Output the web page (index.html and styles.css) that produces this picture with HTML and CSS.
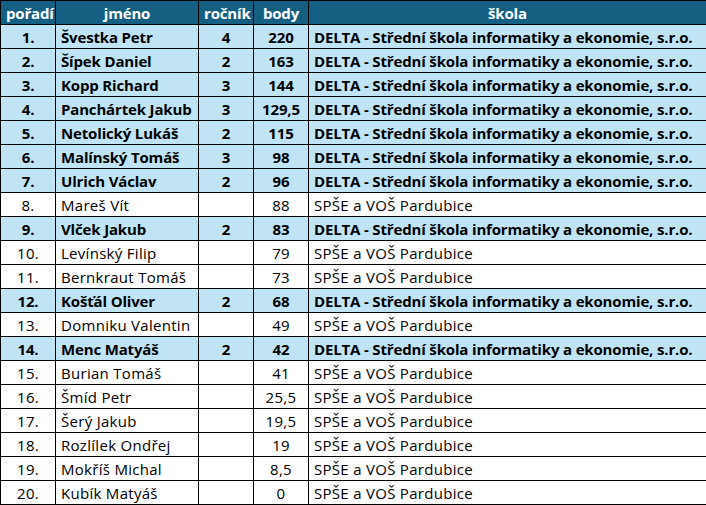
FILE: index.html
```html
<!DOCTYPE html>
<html lang="cs">
<head>
<meta charset="utf-8">
<link rel="stylesheet" href="styles.css">
</head>
<body>
<table class="results">
  <colgroup>
    <col class="c-rank"><col class="c-name"><col class="c-year"><col class="c-pts"><col class="c-school">
  </colgroup>
  <thead>
    <tr><th>pořadí</th><th>jméno</th><th>ročník</th><th>body</th><th>škola</th></tr>
  </thead>
  <tbody>
    <tr class="hl"><td class="ctr">1.</td><td>Švestka Petr</td><td class="ctr">4</td><td class="ctr">220</td><td>DELTA - Střední škola informatiky a ekonomie, s.r.o.</td></tr>
    <tr class="hl"><td class="ctr">2.</td><td>Šípek Daniel</td><td class="ctr">2</td><td class="ctr">163</td><td>DELTA - Střední škola informatiky a ekonomie, s.r.o.</td></tr>
    <tr class="hl"><td class="ctr">3.</td><td>Kopp Richard</td><td class="ctr">3</td><td class="ctr">144</td><td>DELTA - Střední škola informatiky a ekonomie, s.r.o.</td></tr>
    <tr class="hl"><td class="ctr">4.</td><td>Panchártek Jakub</td><td class="ctr">3</td><td class="ctr">129,5</td><td>DELTA - Střední škola informatiky a ekonomie, s.r.o.</td></tr>
    <tr class="hl"><td class="ctr">5.</td><td>Netolický Lukáš</td><td class="ctr">2</td><td class="ctr">115</td><td>DELTA - Střední škola informatiky a ekonomie, s.r.o.</td></tr>
    <tr class="hl"><td class="ctr">6.</td><td>Malínský Tomáš</td><td class="ctr">3</td><td class="ctr">98</td><td>DELTA - Střední škola informatiky a ekonomie, s.r.o.</td></tr>
    <tr class="hl"><td class="ctr">7.</td><td>Ulrich Václav</td><td class="ctr">2</td><td class="ctr">96</td><td>DELTA - Střední škola informatiky a ekonomie, s.r.o.</td></tr>
    <tr><td class="ctr">8.</td><td>Mareš Vít</td><td class="ctr"></td><td class="ctr">88</td><td>SPŠE a VOŠ Pardubice</td></tr>
    <tr class="hl"><td class="ctr">9.</td><td>Vlček Jakub</td><td class="ctr">2</td><td class="ctr">83</td><td>DELTA - Střední škola informatiky a ekonomie, s.r.o.</td></tr>
    <tr><td class="ctr">10.</td><td>Levínský Filip</td><td class="ctr"></td><td class="ctr">79</td><td>SPŠE a VOŠ Pardubice</td></tr>
    <tr><td class="ctr">11.</td><td>Bernkraut Tomáš</td><td class="ctr"></td><td class="ctr">73</td><td>SPŠE a VOŠ Pardubice</td></tr>
    <tr class="hl"><td class="ctr">12.</td><td>Košťál Oliver</td><td class="ctr">2</td><td class="ctr">68</td><td>DELTA - Střední škola informatiky a ekonomie, s.r.o.</td></tr>
    <tr><td class="ctr">13.</td><td>Domniku Valentin</td><td class="ctr"></td><td class="ctr">49</td><td>SPŠE a VOŠ Pardubice</td></tr>
    <tr class="hl"><td class="ctr">14.</td><td>Menc Matyáš</td><td class="ctr">2</td><td class="ctr">42</td><td>DELTA - Střední škola informatiky a ekonomie, s.r.o.</td></tr>
    <tr><td class="ctr">15.</td><td>Burian Tomáš</td><td class="ctr"></td><td class="ctr">41</td><td>SPŠE a VOŠ Pardubice</td></tr>
    <tr><td class="ctr">16.</td><td>Šmíd Petr</td><td class="ctr"></td><td class="ctr">25,5</td><td>SPŠE a VOŠ Pardubice</td></tr>
    <tr><td class="ctr">17.</td><td>Šerý Jakub</td><td class="ctr"></td><td class="ctr">19,5</td><td>SPŠE a VOŠ Pardubice</td></tr>
    <tr><td class="ctr">18.</td><td>Rozlílek Ondřej</td><td class="ctr"></td><td class="ctr">19</td><td>SPŠE a VOŠ Pardubice</td></tr>
    <tr><td class="ctr">19.</td><td>Mokříš Michal</td><td class="ctr"></td><td class="ctr">8,5</td><td>SPŠE a VOŠ Pardubice</td></tr>
    <tr><td class="ctr">20.</td><td>Kubík Matyáš</td><td class="ctr"></td><td class="ctr">0</td><td>SPŠE a VOŠ Pardubice</td></tr>
  </tbody>
</table>
</body>
</html>
```
FILE: styles.css
```css
html, body {
  margin: 0;
  padding: 0;
  background: #ffffff;
}
.results {
  border-collapse: collapse;
  table-layout: fixed;
  width: 706px;
  font-family: "Open Sans", "Noto Sans", sans-serif;
  font-size: 15px;
  color: #000;
  letter-spacing: 0.29px;
}
.c-rank { width: 55px; }
.c-name { width: 143px; }
.c-year { width: 55px; }
.c-pts { width: 55px; }
.c-school { width: 398px; }
.results th, .results td {
  border: 1px solid #000;
  height: 23px;
  padding: 0 5px;
  line-height: 22px;
  white-space: nowrap;
  overflow: hidden;
  vertical-align: middle;
}
.results th {
  background: #156082;
  color: #ffffff;
  font-weight: 700;
  text-align: center;
  letter-spacing: -0.16px;
}
.results td { text-align: left; }
.results td.ctr { text-align: center; }
.results tr.hl td {
  background: #c1e4f5;
  font-weight: 700;
  letter-spacing: -0.16px;
}
```
